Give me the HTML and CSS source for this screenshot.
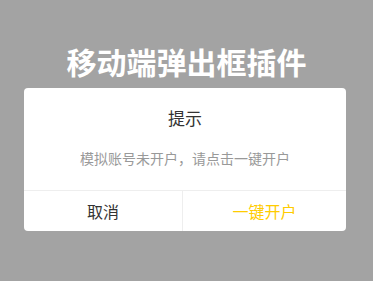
FILE: index.html
```html
<!DOCTYPE html>
<html lang="zh">
<head>
<meta charset="utf-8">
<link rel="stylesheet" href="styles.css">
</head>
<body>
<h1 class="page-title">移动端弹出框插件</h1>
<div class="dialog">
  <div class="dialog-body">
    <div class="dialog-title">提示</div>
    <div class="dialog-msg">模拟账号未开户，请点击一键开户</div>
  </div>
  <div class="dialog-actions">
    <div class="btn btn-cancel">取消</div>
    <div class="btn btn-ok">一键开户</div>
  </div>
</div>
</body>
</html>
```
FILE: styles.css
```css
html, body {
  margin: 0;
  padding: 0;
  background: #a3a3a3;
  height: 100%;
  font-family: "Noto Sans CJK SC", "Noto Sans", sans-serif;
}
.page-title {
  margin: 41px 0 0;
  height: 40px;
  line-height: 40px;
  font-size: 30px;
  font-weight: 700;
  color: #fff;
  text-align: center;
}
.dialog {
  margin: 7px 0 0 24px;
  width: 322px;
  background: #fff;
  border-radius: 4px;
  overflow: hidden;
}
.dialog-body {
  padding: 18px 0 22px;
  text-align: center;
}
.dialog-title {
  font-size: 17px;
  line-height: 24px;
  color: #333;
}
.dialog-msg {
  margin-top: 18px;
  font-size: 14px;
  line-height: 20px;
  color: #999;
}
.dialog-actions {
  display: flex;
  border-top: 1px solid #eee;
  height: 40px;
}
.btn {
  text-align: center;
  line-height: 40px;
  font-size: 16px;
}
.btn-cancel {
  flex: 0 0 158px;
  color: #333;
  border-right: 1px solid #eee;
}
.btn-ok {
  flex: 1;
  color: #ffcc00;
}
```
